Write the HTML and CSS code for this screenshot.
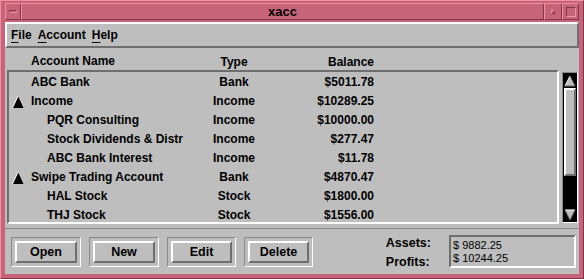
FILE: index.html
```html
<!DOCTYPE html>
<html lang="en">
<head>
    <meta charset="utf-8">
    <title>xacc</title>
    <link rel="stylesheet" href="styles.css">
</head>
<body>
<div class="window">
    <div class="titlebar">
        <div class="tb-btn tb-menu"><span class="tb-bar"></span></div>
        <div class="tb-title">xacc</div>
        <div class="tb-btn tb-min"><span class="tb-dot"></span></div>
        <div class="tb-btn tb-max"><span class="tb-box"></span></div>
    </div>
    <div class="client">
        <div class="menubar">
            <span class="menu"><u>F</u>ile</span>
            <span class="menu"><u>A</u>ccount</span>
            <span class="menu"><u>H</u>elp</span>
        </div>
        <div class="row header">
            <div class="c-name"><span class="slot"></span>Account Name</div>
            <div class="c-type">Type</div>
            <div class="c-bal">Balance</div>
        </div>
        <div class="listarea">
            <div class="list">
                <div class="row">
                    <div class="c-name"><span class="slot"></span>ABC Bank</div>
                    <div class="c-type">Bank</div>
                    <div class="c-bal">$5011.78</div>
                </div>
                <div class="row">
                    <div class="c-name"><span class="slot"><svg width="12" height="12" viewBox="0 0 12 12"><polygon points="6,0 11.5,12 0.5,12" fill="#000"/><polyline points="6,0 0.5,12" stroke="#fff" stroke-width="1" fill="none"/></svg></span>Income</div>
                    <div class="c-type">Income</div>
                    <div class="c-bal">$10289.25</div>
                </div>
                <div class="row sub">
                    <div class="c-name"><span class="slot"></span>PQR Consulting</div>
                    <div class="c-type">Income</div>
                    <div class="c-bal">$10000.00</div>
                </div>
                <div class="row sub">
                    <div class="c-name"><span class="slot"></span>Stock Dividends &amp; Distr</div>
                    <div class="c-type">Income</div>
                    <div class="c-bal">$277.47</div>
                </div>
                <div class="row sub">
                    <div class="c-name"><span class="slot"></span>ABC Bank Interest</div>
                    <div class="c-type">Income</div>
                    <div class="c-bal">$11.78</div>
                </div>
                <div class="row">
                    <div class="c-name"><span class="slot"><svg width="12" height="12" viewBox="0 0 12 12"><polygon points="6,0 11.5,12 0.5,12" fill="#000"/><polyline points="6,0 0.5,12" stroke="#fff" stroke-width="1" fill="none"/></svg></span>Swipe Trading Account</div>
                    <div class="c-type">Bank</div>
                    <div class="c-bal">$4870.47</div>
                </div>
                <div class="row sub">
                    <div class="c-name"><span class="slot"></span>HAL Stock</div>
                    <div class="c-type">Stock</div>
                    <div class="c-bal">$1800.00</div>
                </div>
                <div class="row sub">
                    <div class="c-name"><span class="slot"></span>THJ Stock</div>
                    <div class="c-type">Stock</div>
                    <div class="c-bal">$1556.00</div>
                </div>
            </div>
            <div class="scrollbar">
                <div class="sb-arrow"><svg width="12" height="12" viewBox="0 0 12 12"><polygon points="6,1 11,11 1,11" fill="#bebebe"/><polyline points="6,1 1,11" stroke="#fff" fill="none"/><polyline points="1,11 11,11 6,1" stroke="#6e6e6e" fill="none"/></svg></div>
                <div class="sb-thumb"></div>
                <div class="sb-trough"></div>
                <div class="sb-arrow"><svg width="12" height="12" viewBox="0 0 12 12"><polygon points="1,1 11,1 6,11" fill="#bebebe"/><polyline points="1,1 11,1" stroke="#fff" fill="none"/><polyline points="11,1 6,11 1,1" stroke="#6e6e6e" fill="none"/></svg></div>
            </div>
        </div>
        <div class="bottom">
            <div class="buttons">
                <div class="btn-frame"><div class="btn">Open</div></div>
                <div class="btn-frame"><div class="btn">New</div></div>
                <div class="btn-frame narrow"><div class="btn">Edit</div></div>
                <div class="btn-frame narrow"><div class="btn">Delete</div></div>
            </div>
            <div class="totals">
                <div class="labels">
                    <div>Assets:</div>
                    <div>Profits:</div>
                </div>
                <div class="values">
                    <div>$ 9882.25</div>
                    <div>$ 10244.25</div>
                </div>
            </div>
        </div>
    </div>
</div>
</body>
</html>
```

FILE: styles.css
```css
*{margin:0;padding:0;box-sizing:border-box;}
body{background:#fff;font-family:"Liberation Sans",Arial,sans-serif;font-size:12px;font-weight:bold;color:#000;}

.window{width:584px;height:279px;background:#c8647a;border:1px solid;border-color:#f090a0 #803848 #803848 #f090a0;padding:0 4px 4px 4px;display:flex;flex-direction:column;}

/* title bar */
.titlebar{height:21px;display:flex;padding-top:2px;flex:none;}
.tb-btn{height:17px;border:1px solid;border-color:#f090a0 #803848 #803848 #f090a0;display:flex;align-items:center;justify-content:center;}
.tb-menu{width:16px;}
.tb-bar{width:8px;height:3px;border:1px solid;border-color:#803848 #f090a0 #f090a0 #803848;}
.tb-title{flex:1;height:17px;border:1px solid;border-color:#f090a0 #803848 #803848 #f090a0;text-align:center;line-height:15px;font-size:13px;}
.tb-min{width:18px;}
.tb-dot{width:4px;height:4px;border:1px solid;border-color:#f090a0 #803848 #803848 #f090a0;}
.tb-max{width:17px;}
.tb-box{width:10px;height:10px;border:1px solid;border-color:#803848 #f090a0 #f090a0 #803848;}

.client{flex:1;min-height:0;background:#bebebe;display:flex;flex-direction:column;}

/* menu bar */
.menubar{flex:none;height:26px;border:2px solid;border-color:#fff #6e6e6e #6e6e6e #fff;padding-left:4px;display:flex;gap:6px;align-items:center;}
.menu u{text-underline-offset:3px;}

/* rows */
.row{display:flex;height:19px;line-height:19px;}
.header{flex:none;height:22px;line-height:22px;padding-left:4px;padding-top:3px;}
.c-name{width:196px;display:flex;align-items:center;overflow:hidden;white-space:nowrap;}
.slot{width:22px;flex:none;padding-left:3px;display:flex;align-items:center;}
.sub .c-name{padding-left:16px;}
.c-type{width:58px;text-align:center;}
.c-bal{width:111px;text-align:right;}

.listarea{flex:none;display:flex;height:156px;}
.list{width:552px;height:154px;margin-left:2px;padding-top:1px;border:2px solid;border-color:#6e6e6e #fff #fff #6e6e6e;overflow:hidden;}

/* scrollbar */
.scrollbar{width:16px;height:151px;margin:2px 0 0 3px;border:1px solid;border-color:#8a8a8a #fff #fff #8a8a8a;background:#000;padding:1px;}
.sb-arrow{height:13px;display:flex;align-items:center;justify-content:center;}
.sb-thumb{height:88px;margin-top:1px;background:#bebebe;border:2px solid;border-color:#fff #6e6e6e #6e6e6e #fff;}
.sb-trough{height:32px;}

/* bottom panel */
.bottom{flex:1;margin-top:2px;border-top:1px solid #8a8a8a;display:flex;align-items:center;justify-content:space-between;padding:0 3px 0 6px;}
.buttons{display:flex;gap:8px;}
.btn-frame{width:70px;height:30px;border:1px solid;border-color:#8a8a8a #fff #fff #8a8a8a;padding:3px;}
.btn-frame.narrow{width:69px;}
.btn{height:22px;border:2px solid;border-color:#fff #6e6e6e #6e6e6e #fff;text-align:center;line-height:18px;font-size:12.5px;}

.totals{display:flex;align-items:center;gap:18px;}
.labels{display:flex;flex-direction:column;gap:3px;font-size:12.5px;line-height:16px;padding-top:1px;}
.values{width:127px;height:33px;border:2px solid;border-color:#6e6e6e #fff #fff #6e6e6e;padding:2px 0 0 2px;font-weight:normal;font-size:11px;line-height:13px;}
```
